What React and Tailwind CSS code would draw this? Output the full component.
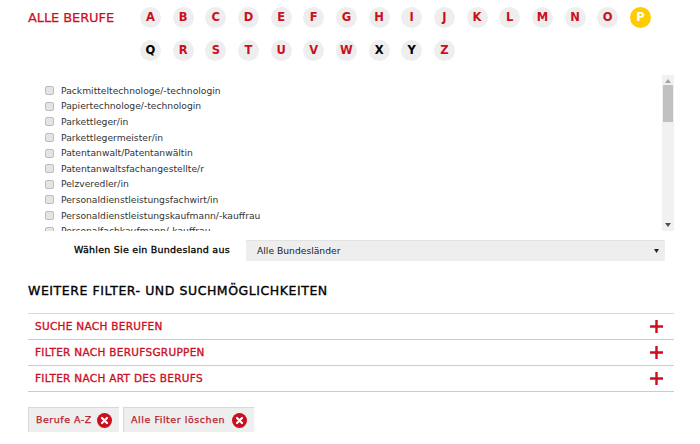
const row1 = "ABCDEFGHIJKLMNOP".split("");
const row2 = "QRSTUVWXYZ".split("");
const black = new Set(["Q", "X", "Y"]);
const jobs = [
  "Packmitteltechnologe/-technologin",
  "Papiertechnologe/-technologin",
  "Parkettleger/in",
  "Parkettlegermeister/in",
  "Patentanwalt/Patentanwältin",
  "Patentanwaltsfachangestellte/r",
  "Pelzveredler/in",
  "Personaldienstleistungsfachwirt/in",
  "Personaldienstleistungskaufmann/-kauffrau",
  "Personalfachkaufmann/-kauffrau",
];
const font = { fontFamily: '"DejaVu Sans", sans-serif' };

function Letter({ c }) {
  const active = c === "P";
  const color = active ? "bg-[#ffcc00] text-white" : black.has(c) ? "bg-[#eeeeee] text-black" : "bg-[#eeeeee] text-[#cc0f1f]";
  return (
    <div className="w-[32.67px] shrink-0">
      <div className={`w-[21px] h-[21px] rounded-full flex items-center justify-center text-[11.5px] font-bold ${color}`}>{c}</div>
    </div>
  );
}

function XIcon() {
  return (
    <svg width="15" height="15" viewBox="0 0 15 15" className="shrink-0">
      <circle cx="7.5" cy="7.5" r="7.5" fill="#cc0f1f" />
      <path d="M5 5l5 5M10 5l-5 5" stroke="#fff" strokeWidth="2.2" strokeLinecap="round" />
    </svg>
  );
}

function Acc({ label }) {
  return (
    <div className="h-[26px] flex items-center justify-between pl-[7px] pr-[11px] border-b border-[#cccccc]">
      <span className="text-[10.5px] tracking-[0.3px] text-[#cc0f1f] [-webkit-text-stroke:0.35px_#cc0f1f]">{label}</span>
      <svg width="13" height="13" viewBox="0 0 13 13"><path d="M6.5 0v13M0 6.5h13" stroke="#cc0f1f" strokeWidth="2.4" /></svg>
    </div>
  );
}

export default function App() {
  return (
    <div className="w-[700px] h-[444px] bg-white overflow-hidden pl-[28px] pr-[26px] pt-[7px]" style={font}>
      <div className="flex">
        <div className="w-[112px] shrink-0 h-[21px] flex items-center text-[13px] text-[#cc0f1f] [-webkit-text-stroke:0.25px_#cc0f1f] tracking-[-0.1px]">ALLE BERUFE</div>
        <div className="flex flex-col gap-[12px]">
          <div className="flex">{row1.map((c) => <Letter key={c} c={c} />)}</div>
          <div className="flex">{row2.map((c) => <Letter key={c} c={c} />)}</div>
        </div>
      </div>

      <div className="mt-[14px] h-[156px] flex justify-between">
        <div className="pl-[17px] pt-[8px] overflow-hidden">
          {jobs.map((j) => (
            <div key={j} className="h-[15.6px] flex items-center">
              <span className="w-[9px] h-[9px] rounded-[2px] bg-[#e4e4e4] border border-[#bdbdbd] mr-[7px] shrink-0" />
              <span className="text-[9.2px] text-[#333333] whitespace-nowrap">{j}</span>
            </div>
          ))}
        </div>
        <div className="w-[12px] bg-[#f1f1f1] flex flex-col items-center">
          <svg width="6" height="4" viewBox="0 0 6 4" className="mt-[4px]"><path d="M3 0l3 4H0z" fill="#a3a3a3" /></svg>
          <div className="w-[10px] h-[37px] bg-[#c1c1c1] mt-[2px]" />
          <svg width="6" height="4" viewBox="0 0 6 4" className="mt-auto mb-[4px]"><path d="M3 4L0 0h6z" fill="#505050" /></svg>
        </div>
      </div>

      <div className="mt-[9px] flex items-center pr-[9px]">
        <div className="w-[218px] shrink-0 pl-[46px] text-[9.5px] tracking-[0.24px] text-black [-webkit-text-stroke:0.3px_#000] whitespace-nowrap">Wählen Sie ein Bundesland aus</div>
        <div className="flex-1 h-[21px] bg-[#eeeeee] border-t border-[#e2e2e2] flex items-center justify-between pl-[11px] pr-[6px]">
          <span className="text-[9.2px] text-[#222222]">Alle Bundesländer</span>
          <svg width="5" height="4" viewBox="0 0 5 4"><path d="M0 0h5L2.5 4z" fill="#222" /></svg>
        </div>
      </div>

      <div className="mt-[22px] text-[12.5px] text-black tracking-[0.55px] [-webkit-text-stroke:0.35px_#000] leading-[16px]">WEITERE FILTER- UND SUCHMÖGLICHKEITEN</div>

      <div className="mt-[14px] border-t border-[#d8d8d8]">
        <Acc label="SUCHE NACH BERUFEN" />
        <Acc label="FILTER NACH BERUFSGRUPPEN" />
        <Acc label="FILTER NACH ART DES BERUFS" />
      </div>

      <div className="mt-[15px] flex gap-[4px]">
        <div className="h-[25px] w-[91px] bg-[#eeeeee] border-t border-l border-[#d8d8d8] flex items-center justify-between pl-[7px] pr-[7px]">
          <span className="text-[9.5px] tracking-[0.5px] text-[#b5202c] [-webkit-text-stroke:0.25px_#b5202c]">Berufe A-Z</span>
          <XIcon />
        </div>
        <div className="h-[25px] w-[131px] bg-[#eeeeee] border-t border-l border-[#d8d8d8] flex items-center justify-between pl-[7px] pr-[7px]">
          <span className="text-[9.5px] tracking-[0.55px] text-[#b5202c] [-webkit-text-stroke:0.25px_#b5202c]">Alle Filter löschen</span>
          <XIcon />
        </div>
      </div>
    </div>
  );
}
